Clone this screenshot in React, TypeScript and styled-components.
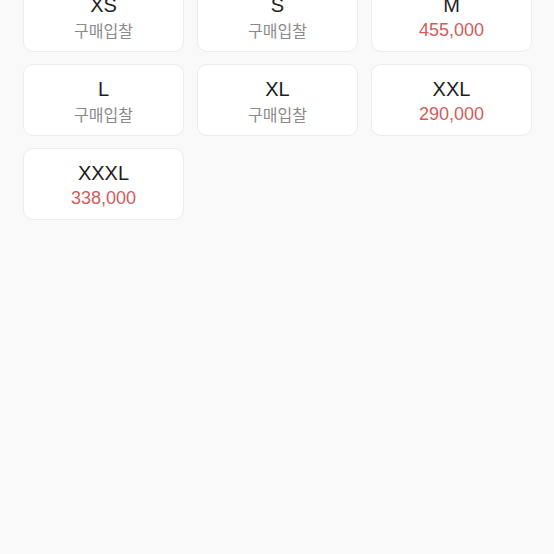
import React from "react";
import styled, { createGlobalStyle } from "styled-components";

const Global = createGlobalStyle`
  html, body { margin: 0; padding: 0; background: #f9f9f9; }
  body { font-family: "Liberation Sans", "Noto Sans CJK KR", sans-serif; }
`;

const Page = styled.div`
  width: 554px;
  height: 554px;
  overflow: hidden;
  background: #f9f9f9;
`;

const Grid = styled.div`
  display: grid;
  grid-template-columns: repeat(3, 161px);
  grid-auto-rows: 72px;
  column-gap: 13px;
  row-gap: 12px;
  padding-left: 23px;
  margin-top: -20px;
`;

const Card = styled.div`
  background: #ffffff;
  border: 1px solid #ececec;
  border-radius: 10px;
  box-sizing: border-box;
  display: flex;
  flex-direction: column;
  align-items: center;
  padding-top: 12px;
`;

const Size = styled.div`
  font-family: "Liberation Sans", sans-serif;
  font-size: 20px;
  line-height: 24px;
  color: #1e1e1e;
`;

const Price = styled.div<{ $bid: boolean }>`
  font-family: ${(p) =>
    p.$bid ? `"Noto Sans CJK KR", sans-serif` : `"Liberation Sans", sans-serif`};
  font-size: ${(p) => (p.$bid ? "16px" : "18px")};
  line-height: 20px;
  margin-top: 3px;
  color: ${(p) => (p.$bid ? "#8a8a8a" : "#d45b5b")};
`;

const items = [
  { size: "XS", price: null },
  { size: "S", price: null },
  { size: "M", price: "455,000" },
  { size: "L", price: null },
  { size: "XL", price: null },
  { size: "XXL", price: "290,000" },
  { size: "XXXL", price: "338,000" },
];

export default function App() {
  return (
    <Page>
      <Global />
      <Grid>
        {items.map((it) => (
          <Card key={it.size}>
            <Size>{it.size}</Size>
            <Price $bid={!it.price}>{it.price ?? "구매입찰"}</Price>
          </Card>
        ))}
      </Grid>
    </Page>
  );
}
